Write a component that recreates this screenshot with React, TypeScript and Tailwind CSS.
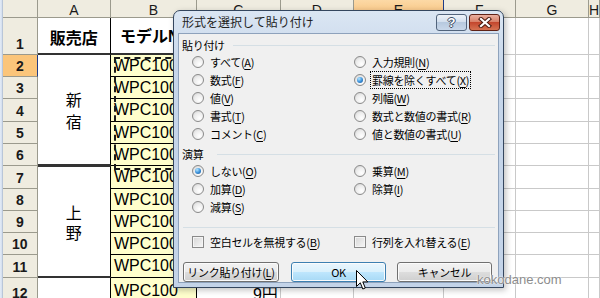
import React from "react";

const JP = "font-['Noto_Sans_CJK_JP',sans-serif]";
const LAT = "font-['Liberation_Sans','Noto_Sans_CJK_JP',sans-serif]";

const COLS = ["A", "B", "C", "D", "E", "F", "G", "H"];

// header cells of the sheet
const HDR =
  "bg-[#efece0] border-r border-b border-[#9b9a8d] flex justify-center text-[14px] leading-none font-bold text-[#1a1a1a] " +
  LAT;
const CELL = "bg-white border-r border-b border-[#c9c9c9]";
const YEL =
  "bg-[#ffffcc] border-r border-b border-black flex items-center pl-[3px] text-[16px] text-black overflow-hidden whitespace-nowrap " +
  LAT;

function Plain({ n }: { n: number }) {
  return (
    <>
      {Array.from({ length: n }).map((_, i) => (
        <div key={i} className={CELL} />
      ))}
    </>
  );
}

function RowHead({ n, active }: { n: number; active?: boolean }) {
  return (
    <div
      className={`${HDR} items-end pb-[3px] ${
        active ? "bg-[#fbc57a] border-r-[#1f3c88]" : ""
      }`}
    >
      {n}
    </div>
  );
}

function Sheet() {
  const rows: React.ReactNode[] = [];

  // column headers
  rows.push(<div key="corner" className={HDR} />);
  COLS.forEach((c) =>
    rows.push(
      <div
        key={"h" + c}
        className={`${HDR} items-center pt-[3px] font-normal ${
          c === "E" ? "bg-[linear-gradient(#fcd9a6,#f8c27c)] border-r-[#1f3c88]" : ""
        }`}
      >
        {c}
      </div>
    )
  );

  // row 1
  rows.push(<RowHead key="r1" n={1} />);
  rows.push(
    <div
      key="a1"
      className={`bg-white border-r border-r-black border-b-2 border-b-[#333] flex items-center justify-center pt-[3px] text-[16px] font-bold ${JP}`}
    >
      販売店
    </div>
  );
  rows.push(
    <div
      key="b1"
      className={`bg-white border-r border-r-black border-b-2 border-b-[#333] flex items-center pl-[9px] pt-[3px] text-[16px] font-bold whitespace-nowrap overflow-hidden ${LAT}`}
    >
      モデルNo
    </div>
  );
  ["販売台数", "単価", "売上"].forEach((t) =>
    rows.push(
      <div
        key={"t" + t}
        className={`bg-white border-r border-r-black border-b-2 border-b-[#333] flex items-center justify-center pt-[3px] text-[16px] font-bold ${JP}`}
      >
        {t}
      </div>
    )
  );
  rows.push(<Plain key="p1" n={3} />);

  // rows 2-11
  for (let r = 2; r <= 11; r++) {
    rows.push(<RowHead key={"r" + r} n={r} active={r === 2} />);
    if (r === 2) {
      rows.push(
        <div
          key="a2"
          className={`row-span-5 bg-white border-r border-r-black border-b-2 border-b-[#333] flex flex-col items-center justify-center text-[16px] leading-[22px] ${JP}`}
        >
          <span>新</span>
          <span>宿</span>
        </div>
      );
    }
    if (r === 7) {
      rows.push(
        <div
          key="a7"
          className={`row-span-5 bg-white border-t border-t-[#333] border-r border-r-black border-b-2 border-b-[#333] flex flex-col items-center justify-center text-[16px] leading-[20px] ${JP}`}
        >
          <span>上</span>
          <span>野</span>
        </div>
      );
    }
    rows.push(
      <div key={"b" + r} className={YEL}>
        WPC100{r - 1}
      </div>
    );
    rows.push(<Plain key={"p" + r} n={6} />);
  }

  // row 12
  rows.push(<RowHead key="r12" n={12} />);
  rows.push(<div key="a12" className="bg-white border-r border-r-black" />);
  rows.push(
    <div key="b12" className={`${YEL} items-start pt-[1px] border-b-0`}>
      WPC100
    </div>
  );
  rows.push(
    <div
      key="c12"
      className={`bg-white border-r border-[#c9c9c9] flex justify-end items-start pt-[8px] pr-[2px] text-[16px] leading-[18px] ${LAT}`}
    >
      9円
    </div>
  );
  rows.push(
    <React.Fragment key="p12">
      {Array.from({ length: 5 }).map((_, i) => (
        <div key={i} className="bg-white border-r border-[#c9c9c9]" />
      ))}
    </React.Fragment>
  );

  return (
    <div className="flex flex-col h-[298px] w-[600px] overflow-hidden">
      <div className="h-[3px] bg-[#d3dbe6]" />
      <div className="flex flex-1">
        <div className="w-[7px] bg-[linear-gradient(90deg,#e4ecf7,#d3deee)] border-r border-[#b9c6d8]" />
        <div className="flex-1 grid grid-cols-[35px_73px_86px_84px_73px_90px_72px_73px_1fr] grid-rows-[18px_37px_22px_22px_23px_22px_22px_23px_22px_22px_22px_23px_1fr]">
          {rows}
        </div>
      </div>
    </div>
  );
}

function Radio({ checked }: { checked?: boolean }) {
  return (
    <span className="w-[12px] h-[12px] shrink-0 rounded-full border border-[#8a8a8a] bg-[radial-gradient(circle_at_65%_70%,#ffffff,#ececec_55%,#c9c9c9)] flex items-center justify-center">
      {checked && (
        <span className="w-[6px] h-[6px] rounded-full bg-[radial-gradient(circle_at_35%_30%,#b4e6ff,#3f94dc_50%,#124f92)]" />
      )}
    </span>
  );
}

function Key({ text, k }: { text: string; k: string }) {
  return (
    <span className="whitespace-nowrap">
      {text}(<span className="underline underline-offset-[2px]">{k}</span>)
    </span>
  );
}

function Opt({
  text,
  k,
  checked,
  focus,
}: {
  text: string;
  k: string;
  checked?: boolean;
  focus?: boolean;
}) {
  return (
    <div className="flex items-center h-[18px] gap-[6px]">
      <Radio checked={checked} />
      <span
        className={
          focus ? "outline outline-1 outline-dotted outline-black outline-offset-[1px]" : ""
        }
      >
        <Key text={text} k={k} />
      </span>
    </div>
  );
}

function Check({ text, k }: { text: string; k: string }) {
  return (
    <div className="flex items-center h-[18px] gap-[6px]">
      <span className="w-[12px] h-[12px] shrink-0 border border-[#8a8a8a] bg-[linear-gradient(135deg,#d6d6d6,#f6f6f6)] shadow-[inset_0_0_0_1px_#f4f4f4]" />
      <Key text={text} k={k} />
    </div>
  );
}

function GroupHead({ label, gap }: { label: string; gap: string }) {
  return (
    <div className="flex items-center h-[14px] pl-[3px] pr-[3px]">
      <span>{label}</span>
      <span className={`flex-1 h-px bg-[#d5dfe5] ${gap}`} />
    </div>
  );
}

const BTN =
  "h-[20px] rounded-[3px] border flex items-center justify-center shadow-[inset_0_0_0_1px_#fbfbfb]";

function Dialog() {
  return (
    <div className="absolute left-[173px] top-[10px] w-[331px] h-[278px] rounded-t-[7px] border border-[#34465e] bg-[linear-gradient(#dbe6f3,#c6d6ea_20%,#c3d3e8)] flex flex-col px-[4px] pb-[4px] shadow-[2px_2px_6px_rgba(0,0,0,0.25)]">
      {/* title bar */}
      <div className="h-[22px] flex justify-between">
        <span className={`pl-[4px] self-center text-[12px] text-[#1e1e1e] ${JP}`}>
          形式を選択して貼り付け
        </span>
        <div className="flex gap-[2px] pt-[3px] -mr-[1px]">
          <div className="w-[31px] h-[17px] rounded-[3px] border border-[#52647c] bg-[linear-gradient(#eef3f9,#d3dfee_45%,#b7c9df_50%,#c8d7ea)] flex items-center justify-center">
            <span className="text-white font-bold text-[13px] leading-none font-['Liberation_Sans',sans-serif] [text-shadow:1px_0_0_#3d4e66,-1px_0_0_#3d4e66,0_1px_0_#3d4e66,0_-1px_0_#3d4e66]">
              ?
            </span>
          </div>
          <div className="w-[31px] h-[17px] rounded-[3px] border border-[#5f2216] bg-[linear-gradient(#eab0a0,#d88068_45%,#c4472e_50%,#d67352)] flex items-center justify-center">
            <svg width="14" height="11" viewBox="0 0 14 11">
              <path d="M3 2 L11 9 M11 2 L3 9" stroke="#4b1a10" strokeWidth="4.2" strokeLinecap="square" />
              <path d="M3 2 L11 9 M11 2 L3 9" stroke="#ffffff" strokeWidth="2.2" strokeLinecap="square" />
            </svg>
          </div>
        </div>
      </div>

      {/* body */}
      <div className={`flex-1 bg-[#f0f0f0] border border-[#8ea2bc] flex flex-col text-[11px] leading-[14px] tracking-[-0.3px] text-black ${JP}`}>
        <div className="mt-[4px]">
          <GroupHead label="貼り付け" gap="ml-[8px]" />
        </div>
        <div className="mt-[1px] pl-[13px] grid grid-cols-[162px_1fr]">
          <Opt text="すべて" k="A" />
          <Opt text="入力規則" k="N" />
          <Opt text="数式" k="F" />
          <Opt text="罫線を除くすべて" k="X" checked focus />
          <Opt text="値" k="V" />
          <Opt text="列幅" k="W" />
          <Opt text="書式" k="T" />
          <Opt text="数式と数値の書式" k="R" />
          <Opt text="コメント" k="C" />
          <Opt text="値と数値の書式" k="U" />
        </div>

        <div className="mt-[4px]">
          <GroupHead label="演算" gap="ml-[14px]" />
        </div>
        <div className="mt-[1px] pl-[13px] grid grid-cols-[162px_1fr]">
          <Opt text="しない" k="O" checked />
          <Opt text="乗算" k="M" />
          <Opt text="加算" k="D" />
          <Opt text="除算" k="I" />
          <Opt text="減算" k="S" />
        </div>

        <div className="mt-[11px] mx-[4px] mr-[3px] h-px bg-[#d5dfe5]" />

        <div className="mt-[5px] pl-[13px] grid grid-cols-[162px_1fr]">
          <Check text="空白セルを無視する" k="B" />
          <Check text="行列を入れ替える" k="E" />
        </div>

        <div className="mt-[11px] pl-[4px] flex">
          <div className={`${BTN} w-[96px] border-[#707070] bg-[linear-gradient(#f2f2f2,#ebebeb_50%,#dddddd_51%,#cfcfcf)]`}>
            <Key text="リンク貼り付け" k="L" />
          </div>
          <div className={`${BTN} ml-[12px] w-[95px] border-[#3c7fb1] bg-[linear-gradient(#eaf6fd,#d9f0fc_50%,#bee6fd_51%,#a7d9f5)] shadow-[inset_0_0_0_1px_#c4ecfd]`}>
            OK
          </div>
          <div className={`${BTN} ml-[11px] w-[95px] border-[#707070] bg-[linear-gradient(#f2f2f2,#ebebeb_50%,#dddddd_51%,#cfcfcf)]`}>
            キャンセル
          </div>
        </div>
      </div>
    </div>
  );
}

export default function App() {
  return (
    <div className="relative w-[600px] h-[298px] overflow-hidden bg-white">
      <Sheet />
      {/* copy marquee around B2:B6 */}
      <div className="absolute left-[114px] top-[57px] w-[88px] h-[113px] border-2 border-dashed border-[#1a1a1a] pointer-events-none" />
      <Dialog />
      {/* mouse pointer */}
      <svg className="absolute left-[356px] top-[270px]" width="13" height="21" viewBox="0 0 13 21">
        <path
          d="M0.5 0.5 L0.5 16.5 L4.3 12.8 L6.8 19 L9.3 18 L6.8 11.9 L11.8 11.9 Z"
          fill="#ffffff"
          stroke="#000000"
          strokeWidth="1"
          strokeLinejoin="miter"
        />
      </svg>
      {/* watermark */}
      <div className="absolute left-[477px] top-[270px] text-[13px] text-[#8c8c8c] font-['Liberation_Sans',sans-serif] [text-shadow:0_0_2px_#ffffff,0_0_1px_#ffffff]">
        kokodane.com
      </div>
    </div>
  );
}
